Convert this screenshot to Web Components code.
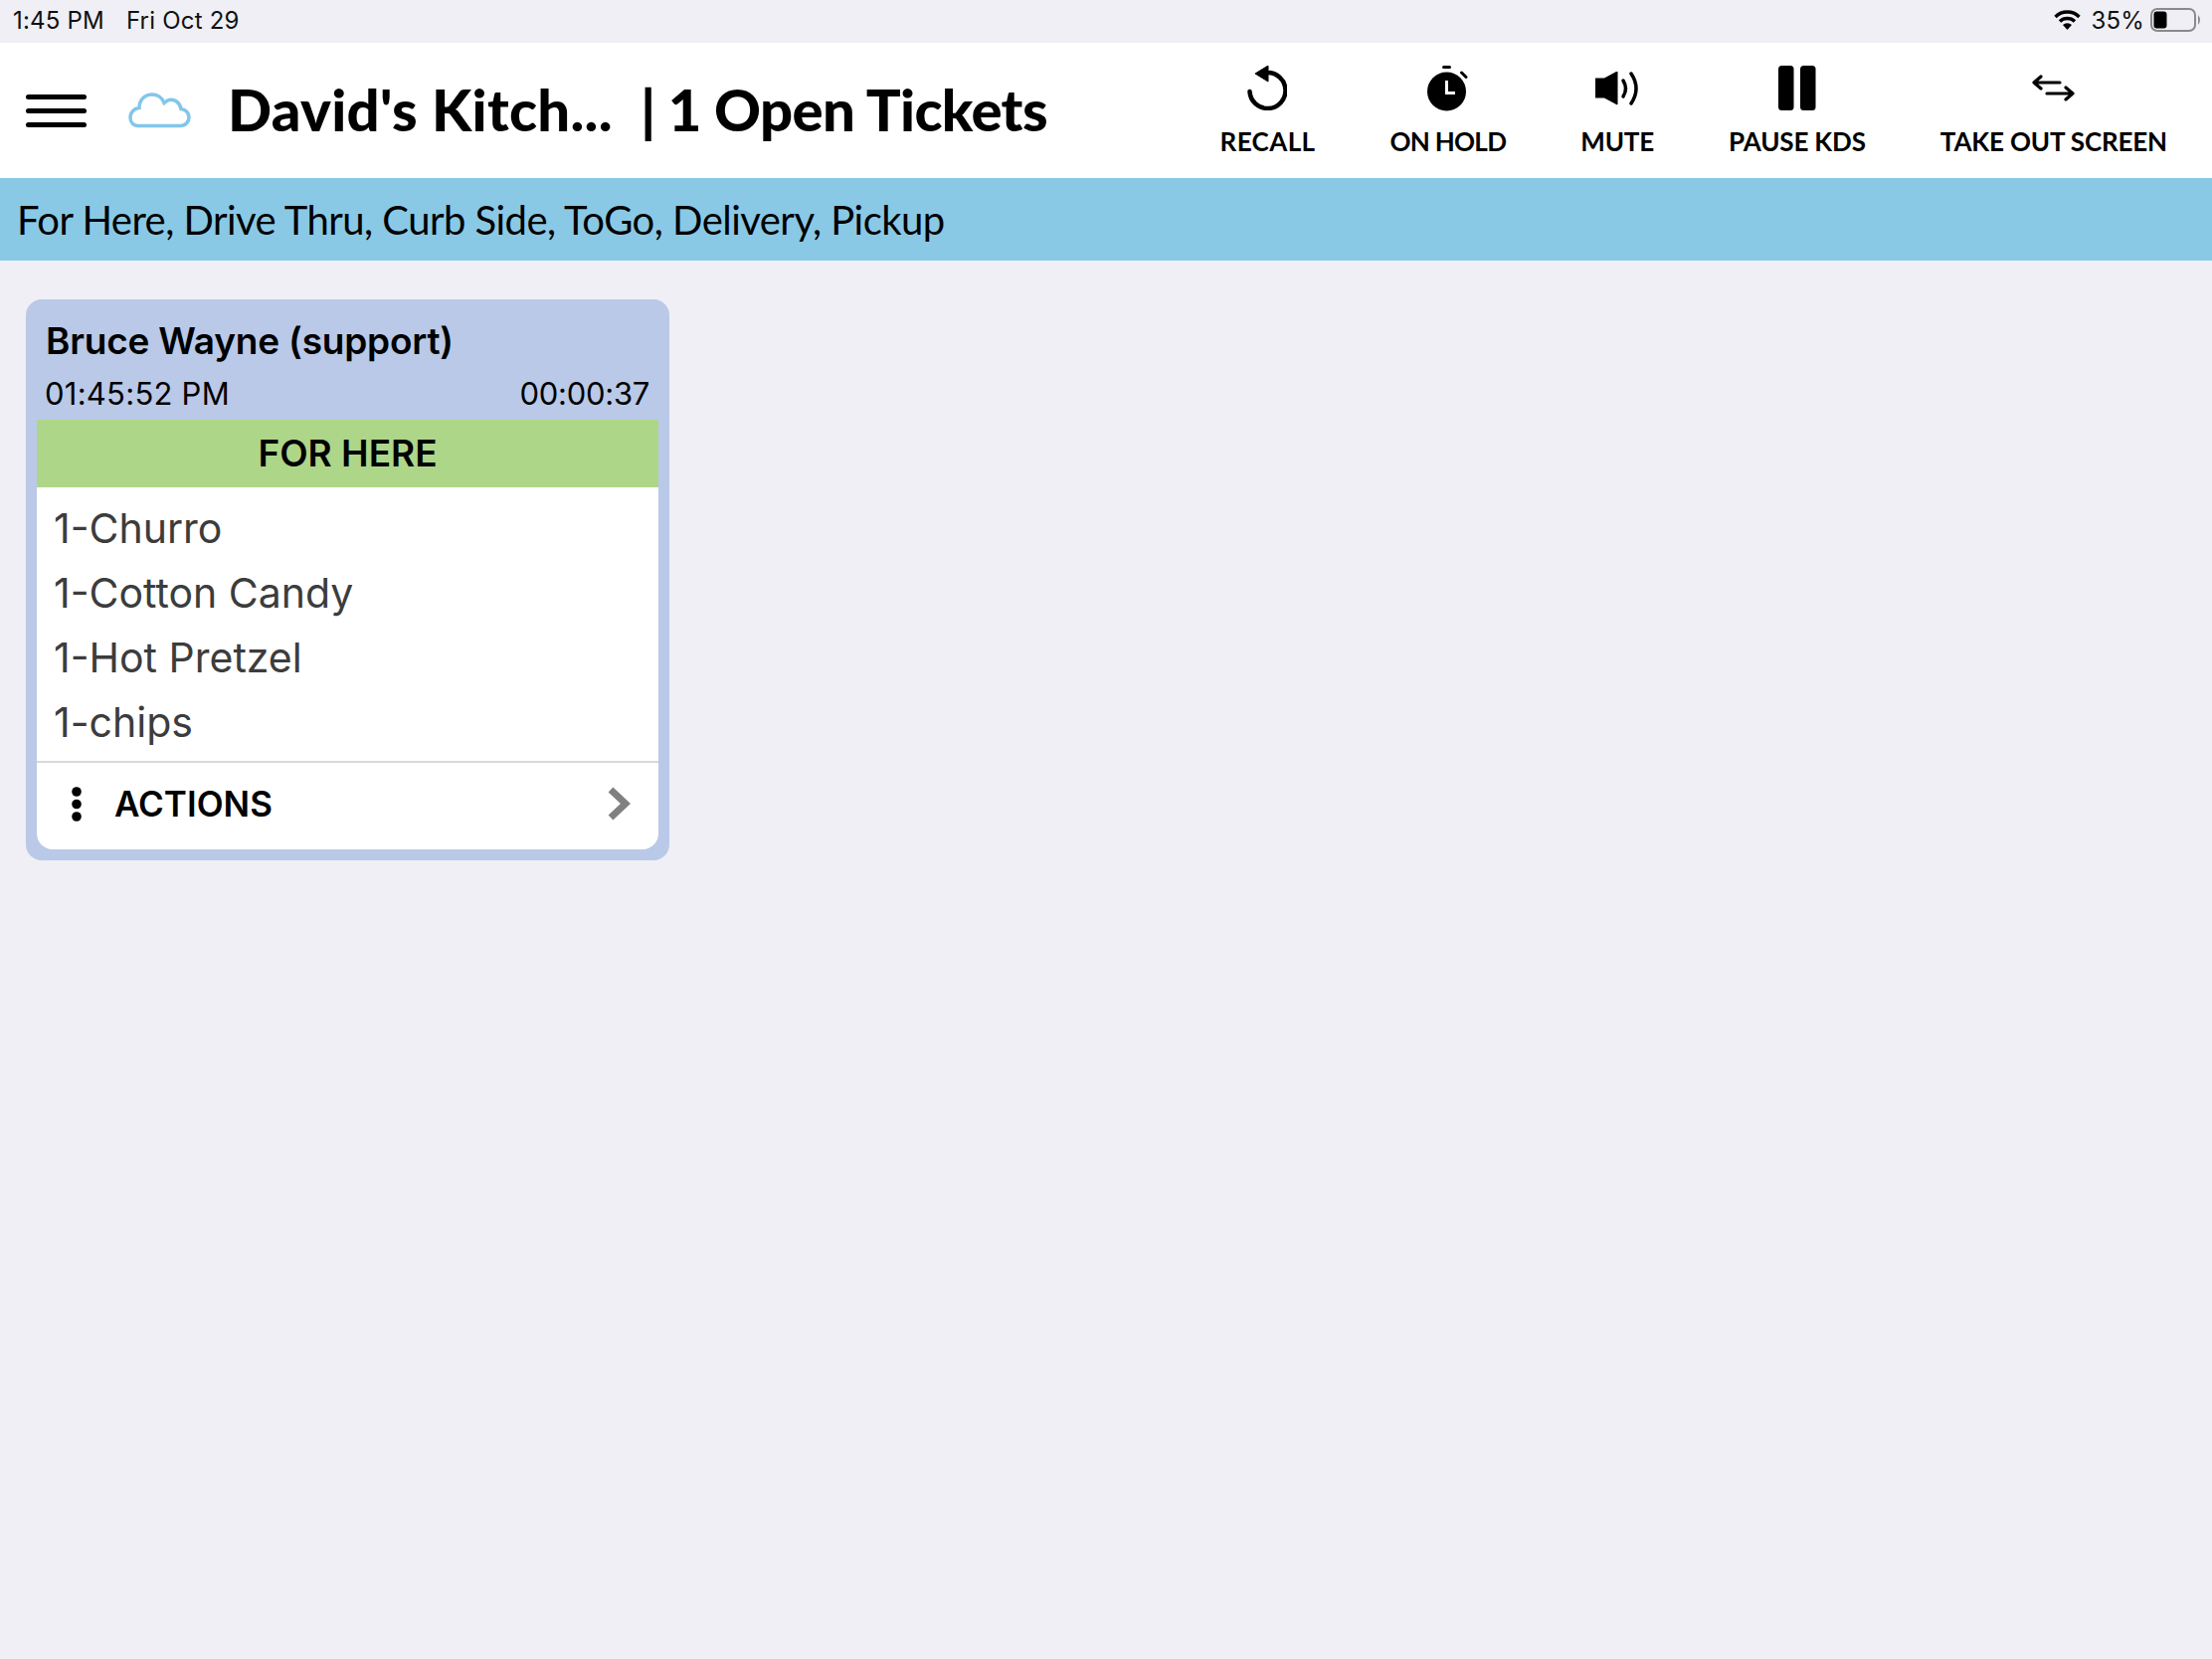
<!DOCTYPE html>
<html lang="en">
<head>
<meta charset="UTF-8">
<title>KDS</title>
<style>
    html, body { margin: 0; height: 100%; }
    body { background: #efeff5; font-family: "Lato", sans-serif; width: 2224px; height: 1668px; overflow: hidden; }
</style>
</head>
<body>
<kds-status-bar></kds-status-bar>
<kds-header>
    <kds-tool label="RECALL" style="--track: 0.4px"><svg viewBox="0 0 40 45" width="40" height="45"><path d="M20 7 A18 18 0 1 1 2.5 26" fill="none" stroke="#000" stroke-width="4.5" stroke-linecap="round"/><path d="M8 8 L21 0 V16 Z" fill="#000" stroke="#000" stroke-width="1" stroke-linejoin="round"/></svg></kds-tool>
    <kds-tool label="ON HOLD" style="--track: -0.7px"><svg viewBox="0 0 41 46" width="41" height="46"><circle cx="19.5" cy="26" r="19.5" fill="#000"/><rect x="15" y="0" width="9" height="3" rx="1.5" fill="#000"/><path d="M34.5 7 L39 11.5" stroke="#000" stroke-width="3" stroke-linecap="round"/><path d="M19.5 15 V27.5 H28" fill="none" stroke="#fff" stroke-width="3"/></svg></kds-tool>
    <kds-tool label="MUTE"><svg viewBox="0 0 44 34" width="44" height="34"><path d="M0 7 H9 L22 0 V33 L9 26 H0 Z" fill="#000" stroke="#000" stroke-width="1" stroke-linejoin="round"/><path d="M28 9 Q33 17 28 25" fill="none" stroke="#000" stroke-width="3.5" stroke-linecap="round"/><path d="M36 2 Q46 17 36 32" fill="none" stroke="#000" stroke-width="3.5" stroke-linecap="round"/></svg></kds-tool>
    <kds-tool label="PAUSE KDS"><svg viewBox="0 0 38 45" width="38" height="45"><rect x="0" y="0" width="15.5" height="45" rx="3.5" fill="#000"/><rect x="22" y="0" width="15.5" height="45" rx="3.5" fill="#000"/></svg></kds-tool>
    <kds-tool label="TAKE OUT SCREEN"><svg viewBox="0 0 43 27" width="43" height="27"><path d="M28 8 H2 M9 2 L2 8 L9 14" fill="none" stroke="#000" stroke-width="3.2" stroke-linecap="round" stroke-linejoin="round"/><path d="M15 19 H41 M34 13 L41 19 L34 25" fill="none" stroke="#000" stroke-width="3.2" stroke-linecap="round" stroke-linejoin="round"/></svg></kds-tool>
</kds-header>
<kds-filter>For Here, Drive Thru, Curb Side, ToGo, Delivery, Pickup</kds-filter>
<kds-board>
    <kds-ticket name="Bruce Wayne (support)" placed="01:45:52 PM" elapsed="00:00:37" kind="FOR HERE">
        <kds-item>1-Churro</kds-item>
        <kds-item>1-Cotton Candy</kds-item>
        <kds-item>1-Hot Pretzel</kds-item>
        <kds-item>1-chips</kds-item>
    </kds-ticket>
</kds-board>

<script>
    class KdsStatusBar extends HTMLElement {
        connectedCallback() {
            this.attachShadow({mode: 'open'}).innerHTML = `
            <style>
                :host { display: flex; align-items: center; justify-content: space-between; height: 43px; padding: 0 10px 3px 13px; font: 24px "Inter", sans-serif; letter-spacing: 0.2px; color: #111; box-sizing: border-box; }
                .left { display: flex; gap: 22px; }
                .right { display: flex; align-items: center; }
                .right svg { display: block; }
                .wifi { margin-right: 10px; }
                .batt { margin-left: 6px; }
            </style>
            <div class="left"><span>1:45 PM</span><span>Fri Oct 29</span></div>
            <div class="right">
                <svg class="wifi" width="27" height="20" viewBox="0 0 27 20"><path d="M1.5 7 A17 17 0 0 1 25.5 7 M6 11.5 A11 11 0 0 1 21 11.5" fill="none" stroke="#000" stroke-width="3.4"/><path d="M9 15 A6.5 6.5 0 0 1 18 15 L13.5 20 Z" fill="#000"/></svg>
                <span>35%</span>
                <svg class="batt" width="52" height="24" viewBox="0 0 52 24"><rect x="1" y="1" width="44" height="22" rx="6" fill="none" stroke="#8a8a8e" stroke-width="2"/><rect x="3.5" y="3.5" width="13" height="17" rx="3" fill="#000"/><path d="M48 7 Q52 12 48 17 Z" fill="#8a8a8e"/></svg>
            </div>`;
        }
    }

    class KdsHeader extends HTMLElement {
        connectedCallback() {
            this.attachShadow({mode: 'open'}).innerHTML = `
            <style>
                :host { display: flex; align-items: center; height: 136px; background: #fff; padding: 0 45px 0 26px; box-sizing: border-box; }
                .menu { display: flex; flex-direction: column; gap: 9px; width: 61px; margin-right: 42px; }
                .menu i { display: block; height: 5px; background: #000; border-radius: 3px; }
                .cloud { margin-right: 37px; display: block; }
                h1 { margin: -4px 0 0; font: 900 58px "Lato", sans-serif; color: #000; white-space: pre; }
                h1 .place { letter-spacing: 0.3px; }
                h1 .count { letter-spacing: -0.6px; }
                nav { margin-left: auto; display: flex; gap: 75px; margin-top: -1px; }
            </style>
            <div class="menu"><i></i><i></i><i></i></div>
            <svg class="cloud" width="63" height="36" viewBox="0 0 63 36"><path d="M10 33.5 H52 C58 33.5 61 29 61 25 C61 20 57 17 53 16.5 C52 10 46 6 41 7.5 C40 7.5 38 9 36 10.5 C34 5 29 2 24 2 C16 2 11 8 11 15.5 C6 16 2 20 2 25 C2 30 5 33.5 10 33.5 Z" fill="#fff" stroke="#82c6ea" stroke-width="3.5"/></svg>
            <h1><span class="place">David's Kitch...  </span><span class="count">| 1 Open Tickets</span></h1>
            <nav><slot></slot></nav>`;
        }
    }

    class KdsTool extends HTMLElement {
        connectedCallback() {
            this.attachShadow({mode: 'open'}).innerHTML = `
            <style>
                :host { display: flex; flex-direction: column; align-items: center; padding-top: 2px; font: 700 26px "Lato", sans-serif; color: #000; letter-spacing: var(--track, -0.15px); }
                .icon { height: 46px; margin-bottom: 14px; display: flex; align-items: center; }
                ::slotted(svg) { display: block; }
            </style>
            <div class="icon"><slot></slot></div>
            <div class="label">${this.getAttribute('label')}</div>`;
        }
    }

    class KdsFilter extends HTMLElement {
        connectedCallback() {
            this.attachShadow({mode: 'open'}).innerHTML = `
            <style>
                :host { display: flex; align-items: center; height: 83px; background: #89c9e6; padding-left: 17px; box-sizing: border-box; font: 400 40px "Lato", sans-serif; letter-spacing: -0.53px; color: #000; }
            </style>
            <slot></slot>`;
        }
    }

    class KdsBoard extends HTMLElement {
        connectedCallback() {
            this.attachShadow({mode: 'open'}).innerHTML = `
            <style>
                :host { display: flex; align-items: flex-start; padding: 39px 26px; }
            </style>
            <slot></slot>`;
        }
    }

    class KdsTicket extends HTMLElement {
        connectedCallback() {
            this.attachShadow({mode: 'open'}).innerHTML = `
            <style>
                :host { display: block; width: 647px; box-sizing: border-box; background: #b9c9e7; border-radius: 16px; padding: 0 11px 11px; font-family: "Inter", sans-serif; color: #000; }
                .name { font-size: 37px; font-weight: 600; letter-spacing: -0.2px; padding: 20px 9px 0; height: 78px; box-sizing: border-box; line-height: 44px; }
                .times { display: flex; justify-content: space-between; font-size: 31px; height: 43px; line-height: 34px; padding: 0 9px 0 8px; }
                .placed { letter-spacing: 0.25px; }
                .elapsed { letter-spacing: -0.3px; }
                .kind { background: #aed688; height: 68px; padding-bottom: 2px; box-sizing: border-box; display: flex; align-items: center; justify-content: center; font-size: 37px; font-weight: 600; }
                .body { background: #fff; border-radius: 0 0 16px 16px; }
                .items { padding: 9px 17px 6px; height: 277px; box-sizing: border-box; border-bottom: 2px solid #d8d8d8; }
                .actions { display: flex; align-items: center; height: 87px; padding: 0 28px 5px 35px; box-sizing: border-box; font-size: 35px; font-weight: 600; }
                .actions b { font-weight: inherit; margin-left: 33px; }
                .actions svg:last-child { margin-left: auto; }
            </style>
            <div class="name">${this.getAttribute('name')}</div>
            <div class="times"><span class="placed">${this.getAttribute('placed')}</span><span class="elapsed">${this.getAttribute('elapsed')}</span></div>
            <div class="kind">${this.getAttribute('kind')}</div>
            <div class="body">
                <div class="items"><slot></slot></div>
                <div class="actions">
                    <svg width="10" height="35" viewBox="0 0 10 35"><circle cx="5" cy="5" r="4.8"/><circle cx="5" cy="17.5" r="4.8"/><circle cx="5" cy="30" r="4.8"/></svg>
                    <b>ACTIONS</b>
                    <svg width="24" height="34" viewBox="0 0 24 34"><path d="M4 3 L19 17 L4 31" fill="none" stroke="#808080" stroke-width="7"/></svg>
                </div>
            </div>`;
        }
    }

    class KdsItem extends HTMLElement {
        connectedCallback() {
            this.attachShadow({mode: 'open'}).innerHTML = `
            <style>
                :host { display: block; height: 65px; font: 400 41px/65px "Inter", sans-serif; color: #3c3c3c; }
            </style>
            <slot></slot>`;
        }
    }

    customElements.define('kds-status-bar', KdsStatusBar);
    customElements.define('kds-header', KdsHeader);
    customElements.define('kds-tool', KdsTool);
    customElements.define('kds-filter', KdsFilter);
    customElements.define('kds-board', KdsBoard);
    customElements.define('kds-ticket', KdsTicket);
    customElements.define('kds-item', KdsItem);
</script>
</body>
</html>
